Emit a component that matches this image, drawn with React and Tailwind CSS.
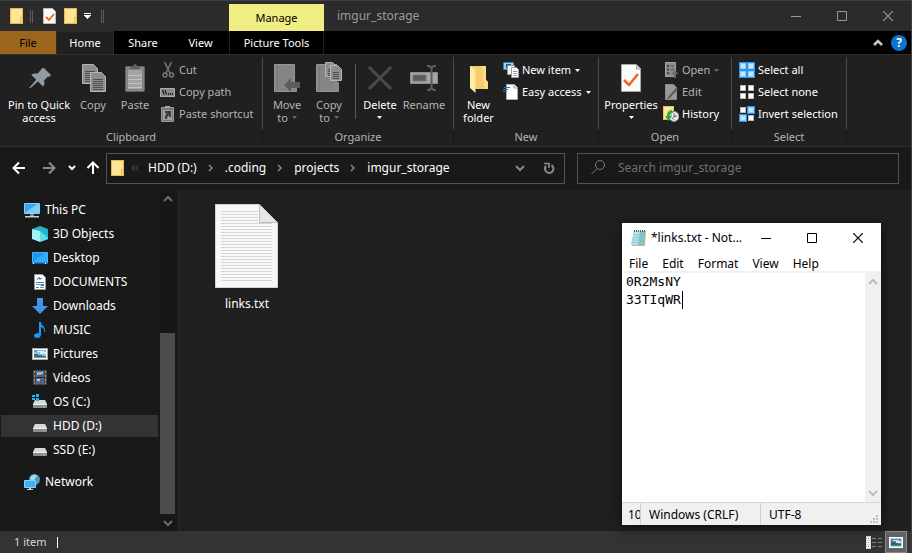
import React from "react";

/* ---------- shared glyphs ---------- */

function Svg({ w = 16, h = w, crisp = false, className = "", children }) {
  return (
    <svg
      width={w}
      height={h}
      viewBox={`0 0 ${w} ${h}`}
      fill="none"
      aria-hidden="true"
      shapeRendering={crisp ? "crispEdges" : "auto"}
      className={`shrink-0 ${className}`}
    >
      {children}
    </svg>
  );
}

const Chevron = ({ dir = "down", className = "", stroke = 2 }) => {
  const d = {
    down: "M1 3l4 4 4-4",
    up: "M1 7l4-4 4 4",
    right: "M3 2l3 3-3 3",
  }[dir];
  return (
    <Svg w={10} className={className}>
      <path d={d} stroke="currentColor" strokeWidth={stroke} />
    </Svg>
  );
};

const Caret = ({ className = "" }) => (
  <Svg w={5} h={3} className={className}>
    <path d="M0 0h5L2.5 3z" fill="currentColor" />
  </Svg>
);

const Folder = () => (
  <Svg w={14} h={16} crisp>
    <path d="M0 0h13v16H0z" fill="#e3b94b" />
    <path d="M1 1h11v14H1z" fill="#fee495" />
    <path d="M10 9h3v7h-3z" fill="#e9bd4a" />
    <path d="M11 10h1v5h-1z" fill="#fbdc82" />
  </Svg>
);

const MiniPicture = () => (
  <Svg w={16} h={12} crisp>
    <path d="M0 0h16v12H0z" fill="#a8a8a8" />
    <path d="M1 1h14v10H1z" fill="#fff" />
    <path d="M2 2h12v8H2z" fill="#8fbfe6" />
    <path d="M2 2h4v2H2z" fill="#5b97d3" />
    <path d="M5 3h7v1H5zM8 4h6v2H8z" fill="#dcedf9" />
    <path d="M2 6h4v1h4v1h4v1H2z" fill="#3f7567" />
    <path d="M2 9h12v1H2z" fill="#5f97bd" />
  </Svg>
);

const ViewPicture = () => (
  <Svg w={14} h={11} crisp>
    <path d="M0 0h14v11H0z" fill="#fff" />
    <path d="M1 1h12v9H1z" fill="#c9ced2" />
    <path d="M2 2h10v7H2z" fill="#3f86cf" />
    <path d="M4 3h6v1H4zM7 4h5v2H7z" fill="#c9e2f5" />
    <path d="M2 5h4v1h3v1h3v1H2z" fill="#35664f" />
  </Svg>
);

/* ---------- ribbon icons ---------- */

const PinIcon = () => (
  <Svg w={32}>
    <path d="M21 6l7 7-2 2-1-.4-4 4c1 3 .3 5-1 6l-5-5-8 7-.8-.8 7-8-5-5c2-1.600 4-2 6-1l4-4-.3-1z" fill="#8f9aa4" />
  </Svg>
);

const Page = ({ x, y, lines = 4, w = 14, h = 18 }) => (
  <g transform={`translate(${x} ${y})`}>
    <path d={`M.5.5h${w - 5}l4 4v${h - 5}h-${w - 1}z`} fill="#8d8d8d" stroke="#b5b5b5" />
    <path d={`M${w - 5}.5v4.500h4.500`} stroke="#c4c4c4" />
    {Array.from({ length: lines }, (_, i) => (
      <path key={i} d={`M3 ${7.5 + i * 2}h${w - 6}`} stroke="#4e4e4e" />
    ))}
  </g>
);

const CopyIcon = () => (
  <Svg w={32}>
    <Page x={5} y={2} w={16} h={20} lines={6} />
    <Page x={13} y={10} w={16} h={20} lines={6} />
  </Svg>
);

const PasteIcon = () => (
  <Svg w={32}>
    <rect x="6.500" y="4.500" width="19" height="25" rx="1" fill="#858585" stroke="#646464" />
    <path d="M9 8h14v19H9z" fill="#a4a4a4" />
    <path d="M9 13.500h14M9 17.500h14M9 21.500h14M9 25.500h14" stroke="#c3c3c3" />
    <path d="M11 7V5h3c0-4 4-4 4 0h3v2z" fill="#606060" />
  </Svg>
);

const CutIcon = () => (
  <Svg>
    <path d="M4.500 0l5.500 11M11.500 0L6 11" stroke="#777" strokeWidth="1.500" />
    <circle cx="5" cy="13" r="2" stroke="#777" strokeWidth="1.500" />
    <circle cx="11.500" cy="13" r="2" stroke="#777" strokeWidth="1.500" />
  </Svg>
);

const PathIcon = () => (
  <Svg>
    <path d="M.5 4.500h14v8H.5z" fill="#8a8a8a" stroke="#aaa" />
    <path d="M2.500 6l1.500 4.500M5 6l1.500 4.500" stroke="#1c1c1c" strokeWidth="1.200" />
    <path d="M8 9h1v2H8zM10 9h1v2h-1zM12 9h1v2h-1z" fill="#222" />
  </Svg>
);

const ShortcutIcon = () => (
  <Svg>
    <path d="M1.500 1.500h12v14h-12z" fill="#777" stroke="#999" />
    <path d="M5 2V0h5v2z" fill="#aaa" />
    <path d="M3 4h9v10H3z" fill="#a0a0a0" />
    <path d="M5 13c0-4 1-5 2-6H5V5h6v6H9V9c-1 1-2 2-2 4z" fill="#3c3c3c" />
  </Svg>
);

const FolderGray = () => (
  <g>
    <path d="M3.500 2.500h20v27h-20z" fill="#858585" stroke="#959595" />
    <path d="M22 20h4v10h-4z" fill="#8a8a8a" />
    <path d="M6.500 3v26" stroke="#7a7a7a" />
  </g>
);

const MoveIcon = () => (
  <Svg w={32}>
    <FolderGray />
    <path d="M13 23l7-7v4h9v6h-9v4z" fill="#5c5c5c" />
  </Svg>
);

const CopyToIcon = () => (
  <Svg w={32}>
    <FolderGray />
    <Page x={12} y={0} w={12} h={15} lines={4} />
    <Page x={17} y={3} w={12} h={16} lines={4} />
  </Svg>
);

const DeleteIcon = () => (
  <Svg w={32}>
    <path d="M5 5l22 22M27 5L5 27" stroke="#4b4b4b" strokeWidth="3" />
  </Svg>
);

const RenameIcon = () => (
  <Svg w={32}>
    <path d="M2.500 10.500h27v11h-27z" fill="#a5a5a5" stroke="#8b8b8b" />
    <path d="M5 13h13v6H5z" fill="#5c5c5c" stroke="#727272" />
    <path d="M19 4h2.500l2 2 2-2H28M23.500 5v22M19 28h2.500l2-2 2 2H28" stroke="#5e5e5e" strokeWidth="2" />
  </Svg>
);

const NewFolderIcon = () => (
  <Svg w={32}>
    <path d="M7 4h16v14l2 2v7H11z" fill="#f5cd69" />
    <path d="M19 4h4v14l2 2v7h-4z" fill="#fbdc85" />
    <path d="M7 4l5.500 4v23L7 26z" fill="#ffe9a6" />
  </Svg>
);

const NewItemIcon = () => (
  <Svg>
    <path d="M.5.5h10v7H.5z" fill="#9ed0ef" stroke="#2f86bd" />
    <path d="M3 2h5v4H3z" fill="#245a80" />
    <path d="M4.500 3.500h7v9h-7z" fill="#f4f4f4" stroke="#999" />
    <path d="M8.500 5.500h5l2 2v8h-7z" fill="#fff" stroke="#999" />
    <path d="M10 9.500h4" stroke="#d77" />
    <path d="M10 11.500h4M10 13.500h4" stroke="#89a8cf" />
  </Svg>
);

const EasyIcon = () => (
  <Svg>
    <path d="M3.500.5h8l3 3v12h-11z" fill="#fff" stroke="#aaa" />
    <path d="M11 1v3h3" stroke="#999" />
    <path d="M1 3.500h6M0 5.500h5M0 7.500h4" stroke="#2771b8" strokeWidth="1.200" />
  </Svg>
);

const PropertiesIcon = () => (
  <Svg w={32}>
    <path d="M6.500 2.500h15l4 4v23h-19z" fill="#fbfbfb" stroke="#a8a8a8" />
    <path d="M21.500 2.500v4.500h4z" fill="#ddd" stroke="#a8a8a8" />
    <path d="M9 18l5 5 9-11" stroke="#f0651b" strokeWidth="2.500" />
  </Svg>
);

const OpenIcon = () => (
  <Svg>
    <path d="M2.500.5h10v14h-10z" fill="#8a8a8a" stroke="#a2a2a2" />
    <path d="M4 3h2v2H4zM4 6.500h2v2H4zM4 10h2v2H4z" fill="#444" />
    <path d="M7.500 4h4M7.500 7.500h4" stroke="#555" />
    <path d="M11 16v-4H8.500L12 8l3.500 4H13v4z" fill="#6a6a6a" />
  </Svg>
);

const EditIcon = () => (
  <Svg>
    <path d="M2.500.5h8l3 3v12h-11z" fill="#9a9a9a" stroke="#888" />
    <path d="M5 13L13 4l2 1-8 9-3 1z" fill="#5c5c5c" />
  </Svg>
);

const HistoryIcon = () => (
  <Svg>
    <path d="M0 0h11v14H0z" fill="#e8c252" />
    <path d="M1 1h9v12H1z" fill="#ffe698" />
    <circle cx="11" cy="10.500" r="5" fill="#ededed" stroke="#8a8a8a" />
    <path d="M11 7v4l3-1M8 9h1M11 14v-1M9 13l4-4" stroke="#777" />
    <path d="M9 4c-4 0-5 4-5 6H2l3.500 5L9 10H7c0-2 1-3 3-3z" fill="#30a83a" />
  </Svg>
);

const Tiles = ({ on, frame }) => (
  <Svg crisp>
    {frame && <path d="M0 0h16v16H0z" fill="#2487d8" />}
    {[[0, 0], [8, 0], [0, 8], [8, 8]].map(([x, y], i) => (
      <g key={i} transform={`translate(${x} ${y})`}>
        {on[i] ? (
          <>
            <path d="M0 0h8v8H0z" fill="#2f93e6" />
            <path d="M1 1h6v6H1z" fill="#8accfb" />
            <path d="M2 2h4v4H2z" fill="#c3e6ff" />
          </>
        ) : (
          <>
            <path d="M1 1h6v6H1z" fill="#b9b9b9" />
            <path d="M2 2h4v4H2z" fill="#fff" />
          </>
        )}
      </g>
    ))}
  </Svg>
);

/* ---------- tree icons ---------- */

const PcIcon = () => (
  <Svg>
    <path d="M.5 1.500h15v10H.5z" fill="#3aa6ee" stroke="#83cdf7" />
    <path d="M1 11L13 2h2v9z" fill="#7fcdfc" />
    <path d="M6 12h4v2H6z" fill="#7d8b95" />
    <path d="M1 14h14v1.500H1z" fill="#c5d2da" />
  </Svg>
);

const CubeIcon = () => (
  <Svg>
    <path d="M0 3l8-3 8 3-8 3z" fill="#2bb0c2" />
    <path d="M0 3l8 2v11l-8-3z" fill="#a5eef2" />
    <path d="M16 3L8 5v11l8-3z" fill="#18bdd0" />
    <path d="M8 5l8 7v1l-8 3z" fill="#60dfe8" />
  </Svg>
);

const DesktopIcon = () => (
  <Svg>
    <path d="M.5 2.500h15v11H.5z" fill="#1a96f0" stroke="#43b3ff" />
    <path d="M1 12L12 3h3v9z" fill="#36a9fb" />
    <path d="M0 13h16v1H0z" fill="#0b5b9d" />
    <path d="M1 13h1v1H1zM13 13h1v1h-1z" fill="#fff" />
  </Svg>
);

const DocIcon = () => (
  <Svg>
    <path d="M2.500.5h8l3 3v12h-11z" fill="#fff" stroke="#9b9b9b" />
    <path d="M5 6l2-3 1 3M8 4.500h2M4 8.500h8M4 13.500h3" stroke="#2c86c9" />
    <path d="M4 10.500h4M8 13.500h4" stroke="#888" />
    <path d="M8.500 10h3.500v2H8.500z" fill="#3a83b8" />
  </Svg>
);

const DownIcon = () => (
  <Svg>
    <path d="M5 0h6v8h5l-8 8-8-8h5z" fill="#3d96e8" />
  </Svg>
);

const MusicIcon = () => (
  <Svg>
    <path d="M7 0h2c0 4 5 4 4 10h-1c1-3-1-4-3-5v8c0 2-2 3-4 3s-3-1-3-2.500C2 12 4 11 7 11z" fill="#149cf5" />
  </Svg>
);

const VideoIcon = () => (
  <Svg crisp>
    <path d="M1 0h14v15H1z" fill="#454545" />
    <path d="M4 1h8v13H4z" fill="#3a6fb5" />
    <path d="M5 2h4v3H5z" fill="#7db4ee" />
    <path d="M9 2h2v2H9zM5 9h3v2H5z" fill="#e8c93a" />
    <path d="M6 5h4v2H6zM8 10h2v3H8z" fill="#b23a2d" />
    <path d="M4 7h8v1H4z" fill="#17284d" />
    <path d="M2 1h1v2H2zM2 5h1v2H2zM2 9h1v2H2zM2 12h1v2H2zM13 1h1v2h-1zM13 5h1v2h-1zM13 9h1v2h-1zM13 12h1v2h-1z" fill="#999" />
  </Svg>
);

const DriveIcon = ({ win }) => (
  <Svg>
    <path d="M3 6h10l2 4H1z" fill="#d9d9d9" />
    <path d="M1 10h14v4H1z" fill="#8b8b8b" />
    <path d="M1 10h14v1H1z" fill="#f0f0f0" />
    <path d="M11 12h2v1h-2z" fill="#63e063" />
    {win && (
      <path d="M0 1h3v2H0zM4 0h3v3H4zM0 4h3v2H0zM4 4h3v3H4z" fill="#16b7f2" />
    )}
  </Svg>
);

const NetIcon = () => (
  <Svg>
    <circle cx="10.500" cy="5.500" r="5.500" fill="#4d9ac0" />
    <path d="M6 4c2-4 5-4 7-2l-3 4-3 1z" fill="#a9d7e8" />
    <path d="M.5 6.500h11v7H.5z" fill="#43aef5" stroke="#8bd0fa" />
    <path d="M5 14h2v1H5zM3 15h6v1H3z" fill="#c5d2da" />
  </Svg>
);

/* ---------- window frame ---------- */

function CaptionButtons({ label, wide, className }) {
  const box = `flex items-center justify-center ${wide}`;
  return (
    <div className={`flex ${className}`}>
      <button aria-label={`Minimize ${label}`} className={box}>
        <Svg w={10} crisp><path d="M0 5h10v1H0z" fill="currentColor" /></Svg>
      </button>
      <button aria-label={`Maximize ${label}`} className={box}>
        <Svg w={10}><path d="M.5.5h9v9H.5z" stroke="currentColor" /></Svg>
      </button>
      <button aria-label={`Close ${label}`} className={box}>
        <Svg w={10}><path d="M0 0l10 10M10 0L0 10" stroke="currentColor" strokeWidth="1.200" /></Svg>
      </button>
    </div>
  );
}

const Grip = () => (
  <Svg w={3} h={13} crisp>
    <path d="M0 0h1v13H0zM2 0h1v13H2z" fill="#5c5c5c" />
  </Svg>
);

function TitleBar() {
  return (
    <header className="flex h-[31px] border-t border-[#3c3f48] bg-[#2b2b2b]">
      <div className="flex w-[229px] items-center gap-[6px] pl-[10px]">
        <Folder />
        <Grip />
        <button aria-label="Properties" className="ml-1">
          <Svg w={15} h={16}>
            <path d="M.5.5h9l3 3v12H.5z" fill="#fafafa" stroke="#bbb" />
            <path d="M3 9l3 3 5-6" stroke="#f0651b" strokeWidth="1.800" />
          </Svg>
        </button>
        <button aria-label="New folder"><Folder /></button>
        <button aria-label="Customize Quick Access Toolbar" className="text-white">
          <Svg w={7} h={6} crisp>
            <path d="M0 0h7v1H0zM0 2h7v1H6v1H5v1H4v1H3V5H2V4H1V3H0z" fill="currentColor" />
          </Svg>
        </button>
        <span className="ml-1"><Grip /></span>
      </div>
      <div className="mt-[3px] flex w-[95px] items-center justify-center bg-[#f0ee82] pt-px text-[11px] text-black">
        Manage
      </div>
      <h1 className="flex flex-1 items-center pl-[13px] text-[12px] text-[#9b9b9b]">imgur_storage</h1>
      <CaptionButtons label="Explorer" wide="w-[46px] pb-px" className="text-[#999]" />
    </header>
  );
}

function Tabs() {
  return (
    <nav className="flex h-[23px] bg-black text-[11px] text-white">
      <button className="w-[56px] bg-[#9b661b] pt-px text-black">File</button>
      <button className="-mb-px w-[58px] border-x border-t border-[#2b2b2b] bg-[#202020]">Home</button>
      <button className="w-[58px] pt-px">Share</button>
      <button className="w-[57px] pt-px">View</button>
      <button className="w-[95px] border-x border-[#202020] pt-px">Picture Tools</button>
      <div className="ml-auto flex items-center gap-2 pr-1">
        <button aria-label="Collapse the ribbon" className="text-[#c8c8c8]">
          <Chevron dir="up" stroke={2.5} />
        </button>
        <button aria-label="Help" className="flex size-4 items-center justify-center rounded-full bg-[#0b74d1] text-[12px] font-bold">
          ?
        </button>
      </div>
    </nav>
  );
}

/* ---------- ribbon ---------- */

function Big({ icon, lines, width, off, drop }) {
  return (
    <button className={`flex flex-col items-center pt-[3px] ${width} ${off ? "text-[#b4b4b4]" : "text-white"}`}>
      {icon}
      <span className="mt-1 flex flex-col items-center whitespace-nowrap leading-[13px]">
        <span>{lines[0]}</span>
        <span className="flex h-[13px] items-center gap-1">
          {lines[1]}
          {drop && <Caret className={off ? "text-[#666]" : "text-white"} />}
        </span>
      </span>
    </button>
  );
}

function Small({ icon, label, off, drop }) {
  return (
    <button className={`flex h-[22px] items-center gap-[3px] whitespace-nowrap ${off ? "text-[#b4b4b4]" : "text-white"}`}>
      {icon}
      {label}
      {drop && <Caret className={`ml-px ${off ? "text-[#666]" : "text-white"}`} />}
    </button>
  );
}

function Group({ title, width, children }) {
  return (
    <section className={`flex shrink-0 ${width}`}>
      <div className="flex flex-1 flex-col pt-1">
        <div className="flex min-h-[71px]">{children}</div>
        <h2 className="pb-[2px] text-center leading-[14px] text-[#b4b4b4]">{title}</h2>
      </div>
      <div className="flex w-px flex-col pt-[2px] pb-[3px]">
        <div className="flex-1 bg-[#4a4a4a]" />
        <div className="h-[14px] bg-[#161616]" />
      </div>
    </section>
  );
}

function Ribbon() {
  return (
    <div className="flex border-y border-[#2f2f2f] bg-[#202020] text-[11px]">
      <Group title="Clipboard" width="w-[263px]">
        <Big icon={<PinIcon />} lines={["Pin to Quick", "access"]} width="w-[78px]" />
        <Big off icon={<CopyIcon />} lines={["Copy"]} width="w-[30px]" />
        <Big off icon={<PasteIcon />} lines={["Paste"]} width="w-[54px]" />
        <div className="-ml-[2px]">
          <Small off icon={<CutIcon />} label="Cut" />
          <Small off icon={<PathIcon />} label="Copy path" />
          <Small off icon={<ShortcutIcon />} label="Paste shortcut" />
        </div>
      </Group>
      <Group title="Organize" width="w-[191px]">
        <Big off drop icon={<MoveIcon />} lines={["Move", "to"]} width="w-[48px]" />
        <Big off drop icon={<CopyToIcon />} lines={["Copy", "to"]} width="w-[36px]" />
        <div className="mt-[5px] ml-2 h-[55px] w-px bg-[#5a5a5a]" />
        <Big drop icon={<DeleteIcon />} lines={["Delete"]} width="w-[48px]" />
        <Big off icon={<RenameIcon />} lines={["Rename"]} width="w-[40px]" />
      </Group>
      <Group title="New" width="w-[145px]">
        <Big icon={<NewFolderIcon />} lines={["New", "folder"]} width="w-[49px]" />
        <div>
          <Small drop icon={<NewItemIcon />} label="New item" />
          <Small drop icon={<EasyIcon />} label="Easy access" />
        </div>
      </Group>
      <Group title="Open" width="w-[133px]">
        <Big drop icon={<PropertiesIcon />} lines={["Properties"]} width="w-[64px]" />
        <div>
          <Small off drop icon={<OpenIcon />} label="Open" />
          <Small off icon={<EditIcon />} label="Edit" />
          <Small icon={<HistoryIcon />} label="History" />
        </div>
      </Group>
      <Group title="Select" width="w-[115px]">
        <div className="pl-[7px]">
          <Small icon={<Tiles frame on={[1, 1, 1, 1]} />} label="Select all" />
          <Small icon={<Tiles on={[0, 0, 0, 0]} />} label="Select none" />
          <Small icon={<Tiles on={[0, 1, 1, 0]} />} label="Invert selection" />
        </div>
      </Group>
    </div>
  );
}

/* ---------- address row ---------- */

const Arrow = ({ dir }) => {
  const d = {
    left: "M13 7H1.500M7 1.500L1.500 7 7 12.500",
    right: "M1 7h11.500M7 1.500l5.500 5.500L7 12.500",
    up: "M7 13V1.500M1.500 7L7 1.500 12.500 7",
  }[dir];
  return (
    <Svg w={14}>
      <path d={d} stroke="currentColor" strokeWidth="2" />
    </Svg>
  );
};

function AddressRow() {
  const path = ["HDD (D:)", ".coding", "projects", "imgur_storage"];
  return (
    <div className="flex h-[43px] items-center bg-[#191919] pr-3 pb-px text-[12px] text-white">
      <div className="flex w-[106px] shrink-0 items-center pl-3">
        <button aria-label="Back"><Arrow dir="left" /></button>
        <button aria-label="Forward" className="ml-4 text-[#8b8b8b]"><Arrow dir="right" /></button>
        <button aria-label="Recent locations" className="ml-3"><Svg w={8} h={6}><path d="M1 1l3 3 3-3" stroke="currentColor" strokeWidth="2" /></Svg></button>
        <button aria-label="Up" className="ml-[10px]"><Arrow dir="up" /></button>
      </div>
      <div className="flex h-[31px] flex-1 items-center border border-[#535353] pl-1">
        <Folder />
        <Svg w={8} h={6} className="ml-[6px]">
          <path d="M3.500.5L1 3l2.500 2.500M7 .5L4.500 3 7 5.500" stroke="#5c5c5c" />
        </Svg>
        <ol className="ml-[9px] flex items-center">
          {path.map((name, i) => (
            <li key={name} className="flex items-center">
              {i > 0 && <Chevron dir="right" className="mx-[9px] text-[#8b8b8b]" stroke={1.5} />}
              <button>{name}</button>
            </li>
          ))}
        </ol>
        <button aria-label="Previous locations" className="mr-2 ml-auto text-[#8b8b8b]"><Chevron /></button>
        <button aria-label="Refresh" className="flex h-full w-[31px] items-center justify-center border-l border-[#141414] text-[#8b8b8b]">
          <Svg w={12}>
            <path d="M8.500 3.200A4.200 4.200 0 1 1 3 4" stroke="currentColor" strokeWidth="2" />
            <path d="M1 1.500h5V6" stroke="currentColor" strokeWidth="1.600" />
          </Svg>
        </button>
      </div>
      <label className="ml-3 flex h-[31px] w-[322px] items-center gap-3 border border-[#535353] pl-3">
        <Svg w={16}>
          <circle cx="10" cy="5" r="4.500" stroke="#7d7d7d" />
          <path d="M7 8.500L1.500 14" stroke="#7d7d7d" />
        </Svg>
        <input
          type="search"
          aria-label="Search imgur_storage"
          placeholder="Search imgur_storage"
          className="min-w-0 flex-1 bg-transparent outline-none placeholder:text-[#6f6f6f]"
        />
      </label>
    </div>
  );
}

/* ---------- main area ---------- */

const tree = [
  ["3D Objects", <CubeIcon />],
  ["Desktop", <DesktopIcon />],
  ["DOCUMENTS", <DocIcon />],
  ["Downloads", <DownIcon />],
  ["MUSIC", <MusicIcon />],
  ["Pictures", <MiniPicture />],
  ["Videos", <VideoIcon />],
  ["OS (C:)", <DriveIcon win />],
  ["HDD (D:)", <DriveIcon />],
  ["SSD (E:)", <DriveIcon />],
];

function TreeItem({ icon, label, child, active }) {
  return (
    <a
      href="#"
      className={`flex h-[22px] items-center gap-[5px] ${child ? "pl-[31px]" : "pl-[23px]"} ${active ? "bg-[#333]" : ""}`}
    >
      {icon}
      {label}
    </a>
  );
}

function Sidebar() {
  return (
    <aside className="flex w-[179px] shrink-0 border-r border-[#2b2b2b] bg-[#191919]">
      <nav className="flex w-[158px] flex-col gap-[2px] pt-[9px] pl-px text-[12px] text-white">
        <TreeItem icon={<PcIcon />} label="This PC" />
        {tree.map(([label, icon]) => (
          <TreeItem key={label} child icon={icon} label={label} active={label === "HDD (D:)"} />
        ))}
        <div className="pt-2">
          <TreeItem icon={<NetIcon />} label="Network" />
        </div>
      </nav>
      <div className="ml-[2px] flex w-[15px] flex-col items-center bg-[#171717] text-[#6d6d6d]">
        <button aria-label="Scroll up" className="flex h-[17px] items-center"><Chevron dir="up" /></button>
        <div className="flex w-full flex-1 flex-col justify-end">
          <div className="h-[59%] bg-[#4d4d4d]" />
        </div>
        <button aria-label="Scroll down" className="flex h-[17px] items-center"><Chevron /></button>
      </div>
    </aside>
  );
}

function TextFile() {
  return (
    <a href="#" className="flex w-[100px] flex-col items-center text-[12px] leading-4 text-white">
      <Svg w={64} h={84}>
        <path d="M.5.5h44l18 18v65H.5z" fill="#f8f8f8" stroke="#d4d4d4" />
        {Array.from({ length: 24 }, (_, i) => (
          <path key={i} d={`M6 ${7.5 + i * 3}h${i < 4 ? 37 : 51}`} stroke="#d5d5d8" />
        ))}
        <path d="M44.500.5v18h18z" fill="#e6e6e6" stroke="#bdbdbd" />
      </Svg>
      <span className="mt-2">links.txt</span>
    </a>
  );
}

function Notepad() {
  return (
    <section
      aria-label="Notepad"
      className="absolute top-[33px] right-[30px] flex h-[302px] w-[259px] flex-col bg-white text-[12px] text-black shadow-[0_2px_12px_rgba(0,0,0,0.6)]"
    >
      <header className="flex h-[30px] items-center">
        <Svg w={16} h={18} className="ml-2">
          <path d="M4 2h12l-1 15H2z" fill="#c8b68c" />
          <path d="M4 2h11l-2 14H1z" fill="#79bfcc" />
          <path d="M4 2h6L8 16H1z" fill="#b5e1e8" />
          <path d="M3 6h11M3 8.500h11M2 11h11M2 13.500h11" stroke="#8fcbd5" />
          <path d="M4.500 1v2M6.500 1v2M8.500 1v2M10.500 1v2M12.500 1v2M14.500 1v2" stroke="#4b6670" />
        </Svg>
        <h2 className="ml-[5px] flex-1 whitespace-nowrap">*links.txt - Not...</h2>
        <CaptionButtons label="Notepad" wide="h-[30px] w-[46px]" className="shrink-0" />
      </header>
      <nav className="flex h-[18px] items-center gap-[14px] pt-[3px] pl-[7px]">
        <button>File</button>
        <button>Edit</button>
        <button>Format</button>
        <button>View</button>
        <button>Help</button>
      </nav>
      <div className="flex flex-1 border-t-2 border-[#f0f0f0]">
        <div className="relative flex flex-1 font-['DejaVu_Sans_Mono','Liberation_Mono',monospace] text-[13px]">
          <textarea
            aria-label="Text editor"
            spellCheck="false"
            defaultValue={"0R2MsNY\n33TIqWR"}
            className="flex-1 resize-none overflow-hidden pl-1 leading-[18px] outline-none"
          />
          <span className="absolute top-[18px] left-[60px] h-[18px] w-px bg-black" />
        </div>
        <div className="flex w-4 flex-col items-center justify-between bg-[#f0f0f0] py-1 text-[#bdbdbd]">
          <button aria-label="Scroll text up"><Chevron dir="up" /></button>
          <button aria-label="Scroll text down"><Chevron /></button>
        </div>
      </div>
      <footer className="flex h-[23px] items-stretch border-t border-[#d7d7d7] bg-[#f0f0f0] leading-[24px]">
        <span className="w-[19px] overflow-hidden border-r border-[#d0d0d0] pl-[6px]">10</span>
        <span className="w-[120px] border-r border-[#d0d0d0] pl-2">Windows (CRLF)</span>
        <span className="flex-1 pl-2">UTF-8</span>
        <Svg w={10} h={10} crisp className="mr-px self-end">
          <path d="M6 0h2v2H6zM3 3h2v2H3zM6 3h2v2H6zM0 6h2v2H0zM3 6h2v2H3zM6 6h2v2H6z" fill="#bdbdbd" />
        </Svg>
      </footer>
    </section>
  );
}

function StatusBar() {
  return (
    <footer className="flex h-[22px] items-center bg-[#333] pl-[14px] text-[11px] text-[#d8d8d8]">
      <span className="pt-px">1 item</span>
      <span className="ml-[11px] h-[11px] w-px bg-white" />
      <button aria-label="Details view" className="ml-auto">
        <Svg w={16} h={13} crisp>
          <path d="M0 0h5v13H0z" fill="#d8d8d8" />
          <path d="M1 1h3v3H1zM1 5h3v3H1zM1 9h3v3H1z" fill="#fff" />
          <path d="M2 2h1v1H2zM2 6h1v1H2z" fill="#3a76b8" />
          <path d="M2 10h1v1H2z" fill="#c33" />
          <path d="M6 2h4v1H6zM12 2h4v1h-4zM6 6h4v1H6zM12 6h4v1h-4zM6 10h4v1H6zM12 10h4v1h-4z" fill="#808080" />
        </Svg>
      </button>
      <button aria-label="Large icons view" className="mr-1 ml-[3px] flex h-[22px] w-[22px] items-center justify-center border border-[#8a8a8a] bg-[#636363]">
        <ViewPicture />
      </button>
    </footer>
  );
}

export default function App() {
  return (
    <div className="flex min-h-screen flex-col border-r border-[#3c3f48] bg-[#202020] font-['Noto_Sans','Open_Sans',sans-serif]">
      <TitleBar />
      <Tabs />
      <Ribbon />
      <AddressRow />
      <div className="flex flex-1">
        <Sidebar />
        <main className="relative flex-1 pt-[14px] pl-[18px]">
          <TextFile />
          <Notepad />
        </main>
      </div>
      <StatusBar />
    </div>
  );
}
